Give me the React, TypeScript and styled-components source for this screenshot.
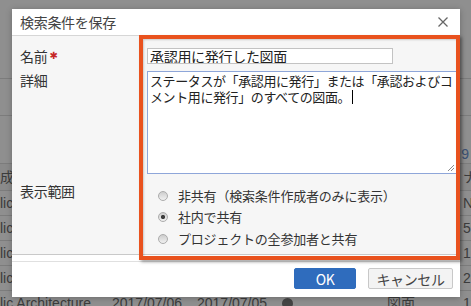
import styled, { createGlobalStyle } from "styled-components"

const GlobalStyle = createGlobalStyle`
  html, body {
    margin: 0;
    padding: 0;
  }
  body {
    width: 471px;
    height: 306px;
    overflow: hidden;
    background: #8f8f8f;
  }
`

// page behind the modal
const Page = styled.div`
  position: relative;
  width: 471px;
  height: 306px;
  overflow: hidden;
  background: #fff;
  color: #6b6b6b;
  font-family: "Liberation Sans", "Noto Sans CJK JP", sans-serif;
  font-size: 14px;
`

const Band = styled.div<{ $h: number }>`
  height: ${p => p.$h}px;
  box-sizing: border-box;
  border-bottom: 1px solid #dedede;
`

const Pager = styled(Band)`
  display: flex;
  justify-content: flex-end;
  align-items: flex-end;
  padding: 0 2px 1px 0;
  color: #6c93cf;
  line-height: 16px;
`

const Row = styled.div<{ $head?: boolean }>`
  display: grid;
  grid-template-columns: 112px 85px 85px 105px 76px 1fr;
  align-items: center;
  height: ${p => (p.$head ? 27 : 25)}px;
  box-sizing: border-box;
  border-bottom: 1px solid #dedede;
  white-space: nowrap;
  background: ${p => (p.$head ? "#f7f7f7" : "#fff")};
`

const Cell = styled.div`
  overflow: hidden;
  line-height: 16px;
`

const LinkIcon = styled.div`
  width: 11px;
  height: 11px;
  border-radius: 50%;
  background: #7a7a7a;
`

const Shade = styled.div`
  position: absolute;
  inset: 0;
  background: rgba(0, 0, 0, 0.44);
`

// dialog
const Dialog = styled.div`
  position: absolute;
  left: 12px;
  top: 9px;
  width: 448px;
  display: flex;
  flex-direction: column;
  background: #fff;
  box-shadow: 0 1px 6px rgba(0, 0, 0, 0.25);
  color: #333;
  font-family: "Noto Sans CJK JP", "Noto Sans", sans-serif;
`

const TitleBar = styled.div`
  height: 27px;
  box-sizing: border-box;
  display: flex;
  align-items: center;
  justify-content: space-between;
  padding: 0 12px 0 8px;
  border-bottom: 1px solid #d6d6d6;
`

const Title = styled.div`
  font-size: 14px;
  letter-spacing: -0.3px;
  line-height: 16px;
  color: #444;
`

const Body = styled.div`
  height: 219px;
  box-sizing: border-box;
  display: flex;
  flex-direction: column;
  padding: 12px 3px 0 8px;
  background: #f6f6f6;
  border-bottom: 1px solid #c9c9c9;
`

const FormRow = styled.div<{ $gap?: number; $center?: boolean }>`
  display: grid;
  grid-template-columns: 127px 1fr;
  align-items: ${p => (p.$center ? "center" : "start")};
  margin-top: ${p => p.$gap ?? 0}px;
`

const Label = styled.div<{ $pad?: number }>`
  font-size: 14px;
  letter-spacing: -0.3px;
  line-height: 16px;
  padding-top: ${p => p.$pad ?? 0}px;
  display: flex;
  align-items: center;
`

const Required = styled.span`
  font-family: "DejaVu Sans", sans-serif;
  font-size: 10px;
  color: #c62828;
  margin-left: 2px;
`

const TextInput = styled.input`
  width: 246px;
  height: 16px;
  box-sizing: border-box;
  margin: 0;
  padding: 0 2px;
  border: 1px solid #c3c3c3;
  background: #fff;
  color: #222;
  font-family: inherit;
  font-size: 14px;
  letter-spacing: -0.3px;
  line-height: 14px;
  outline: none;
`

const TextArea = styled.div`
  position: relative;
  width: 310px;
  height: 103px;
  box-sizing: border-box;
  padding: 1px 3px 0 2px;
  border: 1px solid #8ea6d9;
  background: #fff;
  color: #222;
  font-size: 13px;
  letter-spacing: -0.4px;
  line-height: 16px;
  word-break: break-all;
`

const Caret = styled.span`
  display: inline-block;
  width: 1px;
  height: 14px;
  margin-left: 2px;
  background: #000;
  vertical-align: -2px;
`

const Grip = styled.svg`
  position: absolute;
  right: 1px;
  bottom: 1px;
`

const RadioList = styled.div`
  display: flex;
  flex-direction: column;
  padding: 2px 0 0 11px;
`

const RadioRow = styled.label`
  height: 21.5px;
  display: flex;
  align-items: center;
  gap: 10px;
  font-size: 13px;
  letter-spacing: -0.2px;
  line-height: 16px;
  color: #333;
`

const Radio = styled.input`
  appearance: none;
  width: 10px;
  height: 10px;
  margin: 0;
  box-sizing: border-box;
  border-radius: 50%;
  border: 1px solid #acacac;
  background: linear-gradient(#cdcdcd, #f1f1f1);
  &:checked {
    background: radial-gradient(circle, #3d3d3d 0 1.8px, transparent 2.4px),
      linear-gradient(#cdcdcd, #f1f1f1);
  }
`

const Footer = styled.div`
  padding-top: 6px;
  background: #fff;
`

const FooterBar = styled.div`
  display: flex;
  justify-content: flex-end;
  gap: 12px;
  padding: 6px 7px 8px;
  border-top: 1px solid #e0e0e0;
`

const Button = styled.button<{ $primary?: boolean; $w: number }>`
  width: ${p => p.$w}px;
  height: 21px;
  padding: 0;
  border-radius: 2px;
  border: 1px solid ${p => (p.$primary ? "#2f6cbd" : "#c8c8c8")};
  background: ${p => (p.$primary ? "#2f6cbd" : "#f3f3f3")};
  color: ${p => (p.$primary ? "#fff" : "#444")};
  font-family: inherit;
  font-size: 14px;
  letter-spacing: -0.4px;
  line-height: 16px;
`

const Highlight = styled.div`
  position: absolute;
  left: 127px;
  top: 26px;
  width: 321px;
  height: 225px;
  box-sizing: border-box;
  border: 4px solid #e9521e;
  box-shadow: 2px 2px 3px rgba(0, 0, 0, 0.35), inset 1px 1px 2px rgba(0, 0, 0, 0.18);
  pointer-events: none;
`

const rows = [
  { right: "N/A" },
  { right: "59" },
  { right: "1.3" },
  { right: "26" },
  { right: "1.3" },
]

export default function App() {
  return (
    <>
      <GlobalStyle />
      <Page>
        <Band $h={79} />
        <Band $h={37} />
        <Pager $h={48}>1 - 9</Pager>
        <Row $head>
          <Cell>成</Cell>
          <Cell />
          <Cell />
          <Cell />
          <Cell />
          <Cell>ナンバー</Cell>
        </Row>
        {rows.map((r, i) => (
          <Row key={i}>
            <Cell>lic Architecture</Cell>
            <Cell>2017/07/06</Cell>
            <Cell>2017/07/05</Cell>
            <Cell>
              <LinkIcon />
            </Cell>
            <Cell>図面</Cell>
            <Cell>{r.right}</Cell>
          </Row>
        ))}
        <Shade />

        <Dialog>
          <TitleBar>
            <Title>検索条件を保存</Title>
            <svg width="10" height="10" viewBox="0 0 10 10">
              <path d="M0.5 0.5L9.5 9.5M9.5 0.5L0.5 9.5" stroke="#666" strokeWidth="1.3" />
            </svg>
          </TitleBar>

          <Body>
            <FormRow $center>
              <Label>
                名前<Required>✱</Required>
              </Label>
              <TextInput readOnly value="承認用に発行した図面" />
            </FormRow>

            <FormRow $gap={7}>
              <Label $pad={1}>詳細</Label>
              <TextArea>
                ステータスが「承認用に発行」または「承認およびコメント用に発行」のすべての図面。
                <Caret />
                <Grip width="10" height="10" viewBox="0 0 10 10">
                  <path d="M9 3L3 9M9 6L6 9" stroke="#8a8a8a" strokeWidth="1" />
                </Grip>
              </TextArea>
            </FormRow>

            <FormRow $gap={9}>
              <Label>表示範囲</Label>
              <RadioList>
                <RadioRow>
                  <Radio type="radio" name="scope" readOnly />
                  非共有（検索条件作成者のみに表示）
                </RadioRow>
                <RadioRow>
                  <Radio type="radio" name="scope" defaultChecked />
                  社内で共有
                </RadioRow>
                <RadioRow>
                  <Radio type="radio" name="scope" readOnly />
                  プロジェクトの全参加者と共有
                </RadioRow>
              </RadioList>
            </FormRow>
          </Body>

          <Footer>
            <FooterBar>
              <Button $primary $w={62}>OK</Button>
              <Button $w={85}>キャンセル</Button>
            </FooterBar>
          </Footer>

          <Highlight />
        </Dialog>
      </Page>
    </>
  )
}
